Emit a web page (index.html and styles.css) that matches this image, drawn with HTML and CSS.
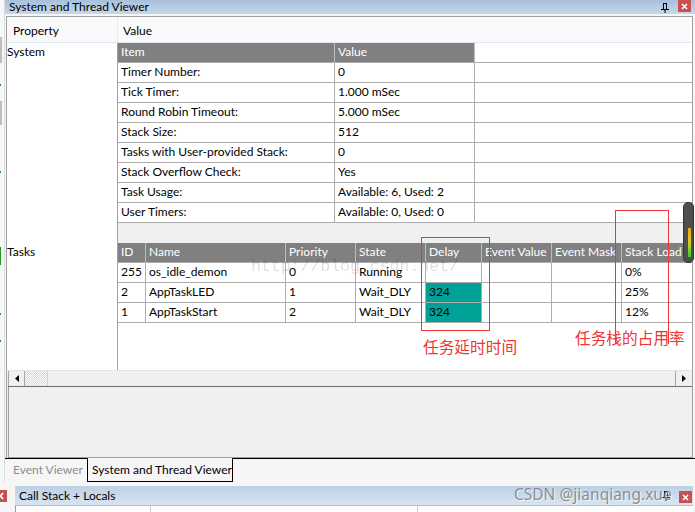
FILE: index.html
```html
<!DOCTYPE html>
<html>
<head>
<meta charset="utf-8">
<link rel="stylesheet" href="styles.css">
</head>
<body>
<div class="top">
  <div class="strip"></div>
  <div class="viewer">
    <div class="titlebar">
      <span class="title">System and Thread Viewer</span>
      <span class="tb-icons">
        <svg class="pin" width="8" height="10" viewBox="0 0 8 10"><path d="M2 0.5H6M2.5 0V6M5.5 0V6M0 6.5H8M4 6.5V10" stroke="#000" stroke-width="1" fill="none"/></svg>
        <span class="close"><svg width="7" height="7" viewBox="0 0 7 7"><path d="M1 1L6 6M6 1L1 6" stroke="#fff" stroke-width="1.6"/></svg></span>
      </span>
    </div>
    <div class="panel">
      <div class="phead">
        <div class="ph-prop">Property</div>
        <div class="ph-val">Value</div>
      </div>
      <div class="pbody">
        <div class="lbl">System</div>
        <div class="tbl">
          <div class="row hdr"><div class="cell w217">Item</div><div class="cell w140">Value</div><div class="cell rest blank"></div></div>
          <div class="row"><div class="cell w217">Timer Number:</div><div class="cell w140">0</div><div class="cell rest"></div></div>
          <div class="row"><div class="cell w217">Tick Timer:</div><div class="cell w140">1.000 mSec</div><div class="cell rest"></div></div>
          <div class="row"><div class="cell w217">Round Robin Timeout:</div><div class="cell w140">5.000 mSec</div><div class="cell rest"></div></div>
          <div class="row"><div class="cell w217">Stack Size:</div><div class="cell w140">512</div><div class="cell rest"></div></div>
          <div class="row"><div class="cell w217">Tasks with User-provided Stack:</div><div class="cell w140">0</div><div class="cell rest"></div></div>
          <div class="row"><div class="cell w217">Stack Overflow Check:</div><div class="cell w140">Yes</div><div class="cell rest"></div></div>
          <div class="row"><div class="cell w217">Task Usage:</div><div class="cell w140">Available: 6, Used: 2</div><div class="cell rest"></div></div>
          <div class="row"><div class="cell w217">User Timers:</div><div class="cell w140">Available: 0, Used: 0</div><div class="cell rest"></div></div>
        </div>
        <div class="lbl"></div>
        <div class="band"></div>
        <div class="lbl">Tasks</div>
        <div class="tbl">
          <div class="row hdr"><div class="cell w28">ID</div><div class="cell w140">Name</div><div class="cell w70">Priority</div><div class="cell w70">State</div><div class="cell w56">Delay</div><div class="cell w70">Event Value</div><div class="cell w70">Event Mask</div><div class="cell rest">Stack Load</div></div>
          <div class="row"><div class="cell w28">255</div><div class="cell w140">os_idle_demon</div><div class="cell w70">0</div><div class="cell w70">Running</div><div class="cell w56"></div><div class="cell w70"></div><div class="cell w70"></div><div class="cell rest">0%</div></div>
          <div class="row"><div class="cell w28">2</div><div class="cell w140">AppTaskLED</div><div class="cell w70">1</div><div class="cell w70">Wait_DLY</div><div class="cell w56 teal">324</div><div class="cell w70"></div><div class="cell w70"></div><div class="cell rest">25%</div></div>
          <div class="row"><div class="cell w28">1</div><div class="cell w140">AppTaskStart</div><div class="cell w70">2</div><div class="cell w70">Wait_DLY</div><div class="cell w56 teal">324</div><div class="cell w70"></div><div class="cell w70"></div><div class="cell rest">12%</div></div>
        </div>
        <div class="lbl fillh"></div>
        <div class="fill"></div>
      </div>
      <div class="hscroll">
        <div class="sb-btn sb-left"><svg width="4" height="7" viewBox="0 0 4 7"><path d="M4 0V7L0 3.5Z" fill="#000"/></svg></div>
        <div class="sb-hatch"></div>
        <div class="sb-thumb"></div>
        <div class="sb-btn sb-right"><svg width="4" height="7" viewBox="0 0 4 7"><path d="M0 0V7L4 3.5Z" fill="#000"/></svg></div>
      </div>
      <div class="lower"></div>
    </div>
    <div class="tabs">
      <div class="tab-left">Event Viewer</div>
      <div class="tab-active">System and Thread Viewer</div>
      <div class="tab-right"></div>
    </div>
  </div>
</div>
<div class="bottom">
  <div class="bclose"><svg width="7" height="12" viewBox="0 0 7 12"><path d="M3 3L0.5 6L3 9" stroke="#fff" stroke-width="1.6" fill="none"/></svg></div>
  <div class="callstack">
    <div class="cs-title">
      <span>Call Stack + Locals</span>
      <span class="tb-icons">
        <svg class="pin" width="8" height="10" viewBox="0 0 8 10"><path d="M2 0.5H6M2.5 0V6M5.5 0V6M0 6.5H8M4 6.5V10" stroke="#000" stroke-width="1" fill="none"/></svg>
        <span class="close"><svg width="7" height="7" viewBox="0 0 7 7"><path d="M1 1L6 6M6 1L1 6" stroke="#fff" stroke-width="1.6"/></svg></span>
      </span>
    </div>
    <div class="cs-body"><div class="cs-c1"></div><div class="cs-c2"></div><div class="cs-c3"></div></div>
  </div>
</div>

<div class="wm-http">http://blog.csdn.net/</div>
<div class="scrollwidget"><div class="sw-bar"></div></div>
<div class="anno-box1"></div>
<div class="anno-box2"></div>
<div class="anno-t1">任务延时时间</div>
<div class="anno-t2">任务栈的占用率</div>
<div class="csdn">CSDN @jianqiang.xue</div>
</body>
</html>
```

FILE: styles.css
```css
* { box-sizing: border-box; }
html, body { margin: 0; padding: 0; }
body {
  width: 695px;
  height: 512px;
  overflow: hidden;
  position: relative;
  background: #f6f6f6;
  font-family: Lato, "Liberation Sans", sans-serif;
  font-size: 12px;
  color: #000;
}
.top { display: flex; height: 482px; }
.strip {
  width: 5px;
  background-color: #f7f7f7;
  border-right: 1px solid #dcdcdc;
  background-image:
    linear-gradient(#bdbdbd, #bdbdbd),
    linear-gradient(#bdbdbd, #bdbdbd),
    linear-gradient(#1a9a1a, #1a9a1a),
    linear-gradient(#1a9a1a, #1a9a1a),
    linear-gradient(#1a9a1a, #1a9a1a),
    linear-gradient(#1a9a1a, #1a9a1a),
    linear-gradient(#1a9a1a, #1a9a1a);
  background-repeat: no-repeat;
  background-size: 2px 26px, 2px 24px, 1px 2px, 1px 18px, 1px 2px, 1px 2px, 1px 2px;
  background-position: 0 37px, 0 101px, 0 171px, 0 247px, 0 313px, 0 340px, 0 84px;
}
.viewer { flex: 1; display: flex; flex-direction: column; min-width: 0; }
.titlebar {
  height: 14px;
  margin-bottom: 2px;
  background: linear-gradient(#a8c0dc, #c7d7ea);
  display: flex;
  align-items: center;
  justify-content: space-between;
  padding: 0 4px;
  line-height: 13px;
}
.title { margin-top: -1px; }
.tb-icons { display: flex; align-items: flex-start; gap: 9px; height: 100%; }
.pin { margin-top: 3px; }
.close {
  width: 13px;
  height: 12px;
  background: #c75050;
  display: flex;
  align-items: center;
  justify-content: center;
}
.panel {
  margin: 0 2px 0 1px;
  border: 1px solid #a0a0a0;
  border-bottom: none;
  background: #f0f0f0;
  display: flex;
  flex-direction: column;
}
.phead {
  height: 26px;
  border-bottom: 1px solid #dbe7f4;
  background: #fafafa;
  display: flex;
}
.ph-prop {
  width: 111px;
  padding-left: 6px;
  padding-top: 6px;
  border-right: 1px solid #ececec;
}
.ph-val { padding-left: 5px; padding-top: 6px; }
.pbody { display: grid; grid-template-columns: 111px 1fr; }
.lbl {
  border-right: 1px solid #a0a0a0;
  background: #fff;
  line-height: 18px;
}
.tbl { background: #fff; }
.row { display: flex; height: 20px; border-bottom: 1px solid #adadad; }
.cell {
  padding-left: 3px;
  line-height: 18px;
  border-right: 1px solid #adadad;
  white-space: nowrap;
  overflow: hidden;
}
.hdr .cell { background: #808080; color: #fff; border-right-color: #bdbdbd; }
.hdr .blank { background: #fff; }
.rest { flex: 1; border-right: none; }
.w217 { width: 217px; }
.w140 { width: 140px; }
.w28 { width: 28px; }
.w70 { width: 70px; }
.w56 { width: 56px; }
.teal { background: #00a298; }
.band { height: 20px; background: #f0f0f0; }
.fill { height: 47px; background: #fff; }
.hscroll {
  margin-left: 1px;
  height: 17px;
  display: flex;
  border-top: 1px solid #e3e3e3;
  border-bottom: 1px solid #6e6e6e;
  background: #f0f0f0;
}
.sb-btn { width: 17px; display: flex; align-items: center; justify-content: center; }
.sb-left { border-left: 1px solid #a5a5a5; border-right: 1px solid #a5a5a5; }
.sb-right { border-left: 1px solid #a5a5a5; }
.sb-hatch {
  width: 22px;
  background-color: #fff;
  background-image: repeating-conic-gradient(#d6d6d6 0 25%, #fff 0 50%);
  background-size: 2px 2px;
}
.sb-thumb { flex: 1; background: #f0f0f0; border-left: 1px solid #d0d0d0; }
.lower {
  margin-left: 1px;
  height: 71px;
  border-left: 1px solid #a0a0a0;
  border-bottom: 1px solid #a0a0a0;
  background: #f0f0f0;
}
.tabs { display: flex; height: 24px; background: #f6f6f6; }
.tab-left {
  width: 82px;
  border-top: 1px solid #000;
  color: #8c8c8c;
  padding-left: 8px;
  line-height: 22px;
}
.tab-active {
  width: 146px;
  border: 1px solid #000;
  border-top: none;
  padding-left: 4px;
  line-height: 23px;
}
.tab-right { flex: 1; border-top: 1px solid #000; }
.bottom { display: flex; margin-top: 4px; height: 26px; }
.bclose { width: 7px; height: 12px; margin-top: 4px; background: #c75050; }
.callstack { margin: 0 2px 0 8px; flex: 1; display: flex; flex-direction: column; }
.cs-title {
  height: 19px;
  background: linear-gradient(#bdd0e5, #d8e4f1);
  display: flex;
  align-items: center;
  justify-content: space-between;
  padding: 0 1px 0 4px;
  line-height: 17px;
}
.cs-title .tb-icons { padding-top: 5px; height: auto; align-self: stretch; }
.cs-title .pin { margin-top: 0; }
.cs-body {
  flex: 1;
  background: #fff;
  border-left: 1px solid #a0a0a0;
  border-top: 1px solid #bcbcbc;
  display: flex;
}
.cs-c1 { width: 135px; border-right: 1px solid #c8c8c8; }
.cs-c2 { width: 267px; border-right: 1px solid #c8c8c8; }
.cs-c3 { flex: 1; }
.wm-http {
  position: absolute;
  left: 251px;
  top: 259px;
  font-family: "Liberation Mono", monospace;
  font-size: 16.5px;
  line-height: 1;
  color: rgba(0, 0, 0, 0.14);
}
.scrollwidget {
  position: absolute;
  left: 683px;
  top: 202px;
  width: 11px;
  height: 61px;
  border-radius: 5px;
  background: #4e4e4e;
  border: 1px solid #333;
}
.sw-bar {
  position: absolute;
  left: 4px;
  top: 25px;
  width: 3px;
  height: 29px;
  background: linear-gradient(#f0a020, #d8cf20 50%, #2ed02e);
}
.anno-box1 {
  position: absolute;
  left: 421px;
  top: 237px;
  width: 69px;
  height: 94px;
  border: 1px solid #ee3434;
}
.anno-box2 {
  position: absolute;
  left: 615px;
  top: 210px;
  width: 54px;
  height: 134px;
  border: 1px solid #ee3434;
  border-bottom: none;
}
.anno-t1, .anno-t2 {
  position: absolute;
  font-family: "Noto Sans CJK SC", sans-serif;
  font-size: 15.7px;
  line-height: 1;
  color: #ee3434;
}
.anno-t1 { left: 423px; top: 339px; }
.anno-t2 { left: 575px; top: 330px; }
.csdn {
  position: absolute;
  left: 514px;
  top: 485px;
  font-family: "Noto Sans", sans-serif;
  font-size: 15.5px;
  line-height: 1.2;
  color: rgba(125, 125, 125, 0.85);
  text-shadow: 1px 1px 0 rgba(255, 255, 255, 0.7);
}
```
